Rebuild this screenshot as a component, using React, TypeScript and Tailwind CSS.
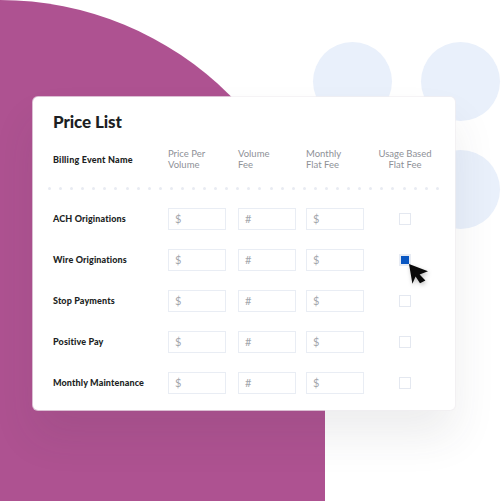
const rows = [
  { name: 'ACH Originations', checked: false },
  { name: 'Wire Originations', checked: true },
  { name: 'Stop Payments', checked: false },
  { name: 'Positive Pay', checked: false },
  { name: 'Monthly Maintenance', checked: false },
];

const dots = Array.from({ length: 36 }, (_, i) => i);

function PriceInput({ symbol, className = '' }: { symbol: string; className?: string }) {
  return (
    <div className={`flex h-[22px] w-[58px] items-center border-[1.5px] border-[#e9edf4] bg-white pl-[6px] text-[11px] text-[#a3a6ac] ${className}`}>
      {symbol}
    </div>
  );
}

function Cursor() {
  return (
    <svg className="absolute left-[9px] top-[9px] drop-shadow-[1px_2px_2px_rgba(0,0,0,0.25)]" width="22" height="22" viewBox="0 0 22 22">
      <path d="M1 1 L20 8.2 L11.6 11.6 L17.4 17.4 L12 20.2 L7.6 13.6 L4.4 20.8 Z" fill="#0a0a0a" />
    </svg>
  );
}

export default function App() {
  return (
    <div className="relative h-[501px] w-[501px] overflow-hidden bg-white font-['Lato','Noto_Sans',sans-serif]">
      <div className="absolute left-0 top-0 h-[501px] w-[325px] rounded-tr-[325px] bg-[#ae5291]" />
      <div className="absolute left-[313px] top-[42px] size-[79px] rounded-full bg-[#e9f0fb]" />
      <div className="absolute left-[421px] top-[42px] size-[79px] rounded-full bg-[#e9f0fb]" />
      <div className="absolute left-[421px] top-[150px] size-[79px] rounded-full bg-[#e9f0fb]" />

      <div className="relative ml-[33px] translate-y-[97px] h-[313px] w-[422px] rounded-[5px] bg-white pl-5 pt-[14px] shadow-[0_26px_44px_rgba(60,60,70,0.09)] ring-1 ring-[#f1eef1]/70">
        <h1 className="text-[17px] font-black leading-[22px] tracking-[-0.1px] text-[#1d1f24]">Price List</h1>

        <div className="mt-[12px] flex h-[28px] items-center text-[9.5px] leading-[11px] text-[#8e9197]">
          <div className="w-[115px] text-[9px] font-black tracking-[0.2px] text-[#1d1f24]">Billing Event Name</div>
          <div className="w-[70px]">Price Per<br />Volume</div>
          <div className="w-[68px]">Volume<br />Fee</div>
          <div className="w-[58px]">Monthly<br />Flat Fee</div>
          <div className="w-[82px] text-center">Usage Based<br />Flat Fee</div>
        </div>

        <div className="-ml-[5px] mt-[14px] flex w-[391px] justify-between">
          {dots.map((d) => (
            <span key={d} className="size-[3px] rounded-full bg-[#e8ebf2]" />
          ))}
        </div>

        <div className="mt-[18px] flex flex-col gap-[19px]">
          {rows.map((row) => (
            <div key={row.name} className="flex h-[22px] items-center">
              <div className="w-[115px] text-[9px] font-black tracking-[0.12px] text-[#1d1f24]">{row.name}</div>
              <PriceInput symbol="$" />
              <PriceInput symbol="#" className="ml-3" />
              <PriceInput symbol="$" className="ml-[10px]" />
              <div className="flex w-[82px] justify-center">
                <div className="relative size-3">
                  {row.checked ? (
                    <>
                      <div className="flex size-3 items-center justify-center bg-[#e8ecf4]">
                        <div className="size-2 bg-[#0a57c2]" />
                      </div>
                      <Cursor />
                    </>
                  ) : (
                    <div className="size-3 border-[1.5px] border-[#e4e8f0] bg-white" />
                  )}
                </div>
              </div>
            </div>
          ))}
        </div>
      </div>
    </div>
  );
}
